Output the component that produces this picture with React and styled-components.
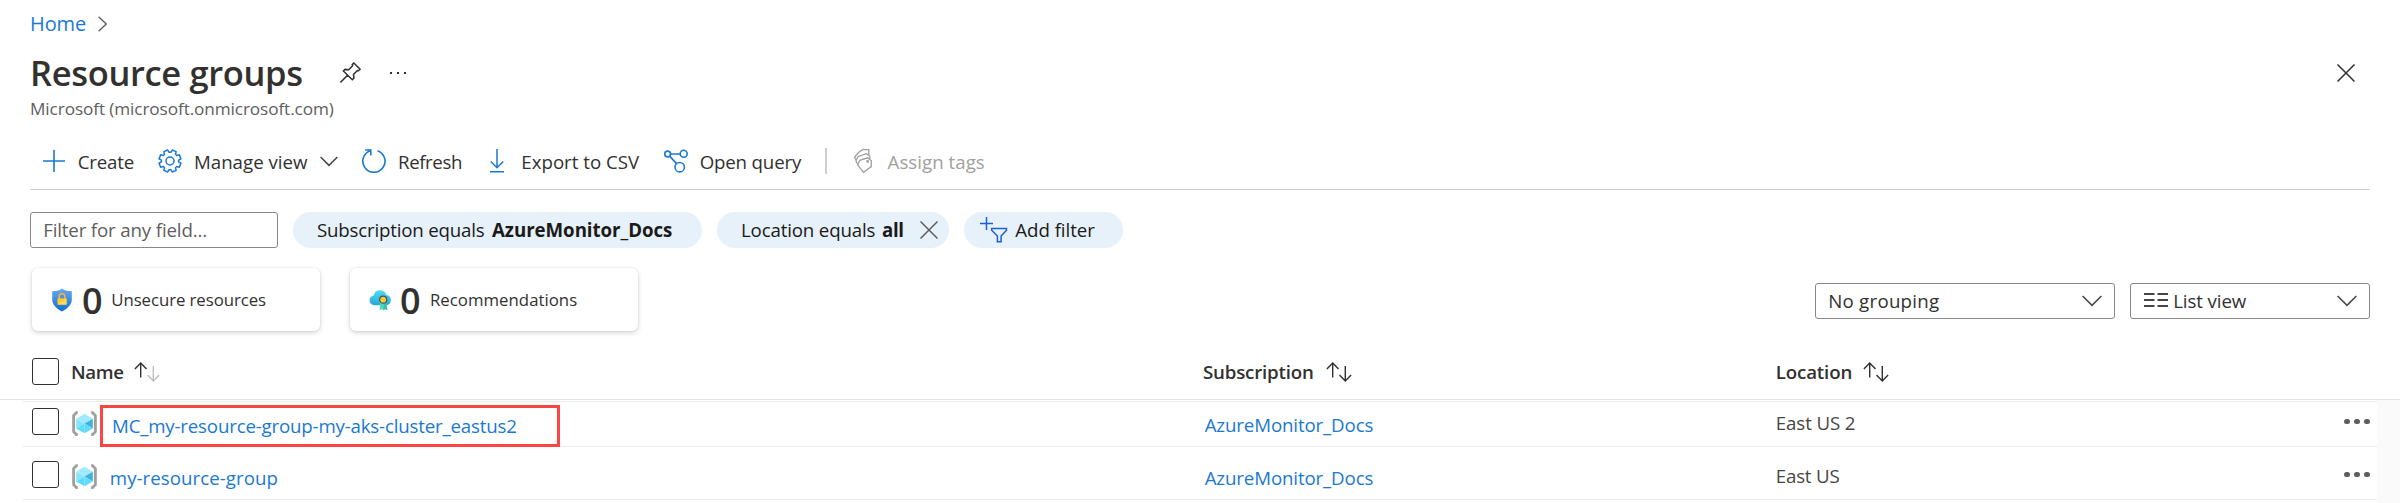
import React from "react";
import styled, { createGlobalStyle } from "styled-components";

const GlobalStyle = createGlobalStyle`
  body {
    margin: 0;
    background: #fff;
    color: #323130;
    font-family: "Open Sans", "Noto Sans", sans-serif;
    overflow: hidden;
  }
  *, *::before, *::after { box-sizing: border-box; }
  svg { display: block; flex: none; }
`;

const BLUE = "#1b79d2";

const Page = styled.main`
  width: 2400px;
  height: 503px;
  background: #fff;
  overflow: hidden;
`;

const Label = styled.span`
  flex: none;
  display: block;
  white-space: pre;
  font-size: ${(p) => p.$size || 18.7}px;
  line-height: ${(p) => p.$line || 25}px;
  font-weight: ${(p) => p.$weight || 400};
  letter-spacing: ${(p) => p.$track || 0}px;
  color: ${(p) => p.$color || "inherit"};
  width: ${(p) => (p.$w ? p.$w + "px" : "auto")};
  margin-left: ${(p) => p.$gap || 0}px;
`;

const LinkText = styled(Label).attrs({ as: "a" })`
  color: ${BLUE};
  text-decoration: none;
`;

const Icon = styled.svg`
  margin-left: ${(p) => p.$gap || 0}px;
  fill: none;
  stroke: ${(p) => p.$stroke || BLUE};
  stroke-width: ${(p) => p.$weight || 1.5};
`;

const Breadcrumb = styled.nav`
  height: 47px;
  padding-left: 30px;
  display: flex;
  align-items: center;
`;

const TitleRow = styled.header`
  height: 51px;
  padding: 0 45px 0 30px;
  display: flex;
  align-items: center;
`;

const Spacer = styled.div`
  flex: 1;
`;

const Subtitle = styled.div`
  height: 21px;
  padding-left: 30px;
  display: flex;
  align-items: center;
  color: #605e5c;
`;

const Toolbar = styled.div`
  height: 56px;
  margin: 15px 30px 0;
  padding-left: 13px;
  border-bottom: 1px solid #d2d0ce;
  display: flex;
  align-items: center;

  ${Icon} { margin-bottom: 1px; }
`;

const Separator = styled.div`
  width: 2px;
  height: 26px;
  margin-left: 23px;
  margin-bottom: 1px;
  background: #d2d0ce;
`;

const Filters = styled.div`
  display: flex;
  gap: 15px;
  margin: 22px 30px 0;
`;

const Field = styled.div`
  display: flex;
  align-items: center;
  width: ${(p) => p.$w}px;
  height: 36px;
  padding: 0 ${(p) => p.$right || 0}px 1px ${(p) => p.$left || 0}px;
  border: 1px solid #8a8886;
  border-radius: 3px;
`;

const Pill = styled.div`
  display: flex;
  align-items: center;
  width: ${(p) => p.$w}px;
  height: 36px;
  padding: 0 0 1px ${(p) => p.$left}px;
  border-radius: 18px;
  background: #e6f1fa;
  color: #1b1a19;
`;

const Summary = styled.section`
  display: flex;
  margin: 20px 30px 0 32px;
  height: 63px;
`;

const Card = styled.div`
  display: flex;
  align-items: center;
  width: 288px;
  height: 63px;
  margin-right: 30px;
  padding-left: ${(p) => p.$left}px;
  border-radius: 6px;
  background: #fff;
  box-shadow: 0 2px 5px rgba(0, 0, 0, 0.16), 0 0 2px rgba(0, 0, 0, 0.12);
`;

const Count = styled(Label)`
  font-size: 36px;
  line-height: 49px;
  font-weight: 600;
  letter-spacing: -0.5px;
  margin-top: 1px;
`;

const Selects = styled.div`
  display: flex;
  gap: 15px;
  padding-top: 15px;
`;

const COLUMNS = "1180px 572.8px 1fr";

const TableHead = styled.div`
  display: grid;
  grid-template-columns: ${COLUMNS};
  height: 56px;
  margin-top: 13px;
  padding-left: 23px;
  border-bottom: 1px solid #e4e3e2;
`;

const HeadCell = styled.div`
  display: flex;
  align-items: center;
  padding-left: ${(p) => p.$left || 0}px;
`;

const TableBody = styled.div`
  display: grid;
  grid-template-columns: 1fr 23px;
  height: 103px;
`;

const RowList = styled.div`
  margin: 1px 0 0 23px;
  border-top: 1px solid #edebe9;
`;

const Gutter = styled.div`
  background: #fafafa;
`;

const Row = styled.div`
  display: grid;
  grid-template-columns: ${COLUMNS};
  height: ${(p) => p.$h}px;
  border-bottom: 1px solid #edebe9;
`;

const Cell = styled.div`
  display: flex;
  align-items: flex-end;
  padding-left: ${(p) => p.$left || 0}px;
  padding-bottom: ${(p) => p.$bottom || 0}px;
`;

const NameCell = styled(Cell)`
  position: relative;
`;

const CheckBox = styled.div`
  flex: none;
  width: 27px;
  height: 27px;
  margin-bottom: ${(p) => p.$bottom || 0}px;
  border: 1px solid #323130;
  border-radius: 3px;
`;

const RowIcon = styled.div`
  margin: 0 0 10px 13px;
`;

const TextSlot = styled.div`
  margin-bottom: ${(p) => p.$bottom}px;
`;

const Highlight = styled.div`
  position: absolute;
  left: 77px;
  top: 3px;
  width: 460px;
  height: 42px;
  border: 3px solid #fb4444;
`;

const Dots = styled.div`
  display: flex;
  gap: 4.5px;
  margin: 0 7.5px 22px auto;
`;

const Dot = styled.i`
  width: 5.4px;
  height: 5.4px;
  border-radius: 50%;
  background: #605e5c;
`;

const Chevron = ({ gap, w = 20, h = 10 }) => (
  <Icon $gap={gap} $stroke="#484644" width={w} height={h + 2} viewBox={`0 0 ${w} ${h + 2}`}>
    <path d={`M.6 1L${w / 2} ${h + 0.4}L${w - 0.6} 1`} />
  </Icon>
);

const Cross = ({ gap, color, weight }) => (
  <Icon $gap={gap} $stroke={color} $weight={weight} width="18" height="18" viewBox="0 0 18 18">
    <path d="M.5.5l17 17M17.5.5l-17 17" />
  </Icon>
);

const gearPath = (() => {
  const pts = [];
  const teeth = 8;
  for (let i = 0; i < teeth; i++) {
    const a = (i * 2 * Math.PI) / teeth - Math.PI / 2 + Math.PI / 8;
    [[-0.29, 8.7], [-0.19, 11.2], [0.19, 11.2], [0.29, 8.7]].forEach(([d, r]) =>
      pts.push(`${(12 + r * Math.cos(a + d)).toFixed(2)} ${(12 + r * Math.sin(a + d)).toFixed(2)}`)
    );
  }
  return "M" + pts.join("L") + "Z";
})();

const SortArrows = ({ ascending }) => (
  <Icon $gap={11} $stroke="#323130" $weight="1.4" width="26" height="20" viewBox="0 0 26 20">
    <path d="M6.7 15.5V1.2M.9 6.9l5.8-5.9 5.8 5.9" />
    <path stroke={ascending ? "#c0bebc" : "#323130"} d="M19.3 4v14.6M13.5 13l5.8 5.9 5.8-5.9" />
  </Icon>
);

const CubeIcon = () => (
  <svg width="25" height="25" viewBox="0 0 25 25">
    <path d="M5.800 1.700H4.400L1.600 4.500v16.200l2.800 2.800h1.400M19.200 1.700h1.400l2.800 2.800v16.200l-2.800 2.800h-1.400" fill="none" stroke="#a0a0a0" strokeWidth="2.800" />
    <path d="M12.500 2.800l8.300 4.900-8.300 4.800-8.300-4.800z" fill="#a0eafd" />
    <path d="M4.200 7.700l8.300 4.800-8.300 4.900z" fill="#86e4fb" />
    <path d="M4.200 17.400l8.300-4.900v9.800z" fill="#5bdcfb" />
    <path d="M20.800 7.700l-8.300 4.800 8.300 4.900z" fill="#3fb3d6" />
    <path d="M12.500 12.500l8.300 4.900-8.300 4.900z" fill="#5fdcfa" />
  </svg>
);

const Shield = () => (
  <svg width="20" height="24" viewBox="0 0 20 24">
    <defs>
      <linearGradient id="shield" x1="0" y1="0" x2="0" y2="1">
        <stop offset="0" stopColor="#6aa8f0" />
        <stop offset="1" stopColor="#0f6fd0" />
      </linearGradient>
    </defs>
    <path d="M10 .5c3 2.400 6.300 2.600 9.800 2.800v8.200c0 6-5.300 9.600-9.800 12C5.500 21.100.2 17.500.2 11.500V3.300C3.700 3.100 7 2.900 10 .5z" fill="url(#shield)" />
    <path d="M7.200 11V8.300a2.800 2.800 0 015.600 0V11" fill="none" stroke="#f7b23b" strokeWidth="1.600" />
    <path d="M5.500 10.400h9v6.200h-9z" fill="#ffca28" />
    <path d="M5.500 16.600l9-6.200v6.200z" fill="#ffd75e" />
  </svg>
);

const CloudBadge = () => (
  <svg width="22" height="22" viewBox="0 0 22 22">
    <defs>
      <linearGradient id="cloud" x1="0" y1="0" x2="0" y2="1">
        <stop offset="0" stopColor="#50dcf2" />
        <stop offset="1" stopColor="#2ba6d8" />
      </linearGradient>
    </defs>
    <path d="M5.200 16.300a5 5 0 01-.6-9.900A6.700 6.700 0 0117.500 6a5.200 5.200 0 01-.3 10.300z" fill="url(#cloud)" />
    <path d="M11.200 13.500l5.800 0 1.400 7.700-2.600-1.100-1.200 1.400-1.200-1.400-2.800 1.100z" fill="#4fd8c0" />
    <path d="M14.600 14v7.500l1.200-1.400 2.600 1.100L17 13.500z" fill="#38bfa8" />
    <circle cx="14.200" cy="10.700" r="3.500" fill="#ffca28" stroke="#3a5565" strokeWidth="1.200" />
  </svg>
);

const rows = [
  { name: "MC_my-resource-group-my-aks-cluster_eastus2", gap: 15, track: -0.182, bottom: 8, region: "East US 2", regionTrack: -0.114, h: 45, marked: true },
  { name: "my-resource-group", gap: 12.8, track: 0.044, bottom: 9, region: "East US", regionTrack: -0.2, h: 53 },
];

export default function App() {
  return (
    <Page>
      <GlobalStyle />
      <Breadcrumb>
        <LinkText $size={20} $line={27} $track={-0.098} $w={56} href="#">Home</LinkText>
        <Icon $gap={12} $stroke="#605e5c" $weight="1.3" width="9" height="16" viewBox="0 0 9 16">
          <path d="M.6.7L8.200 8 .6 15.300" />
        </Icon>
      </Breadcrumb>

      <TitleRow>
        <Label $size={34.5} $line={47} $weight={600} $track={-0.34} $w={273}>Resource groups</Label>
        <Icon $gap={37} $stroke="#323130" width="21" height="21" viewBox="0 0 21 21">
          <path d="M13.800 1l6.300 6.200-1.500 1.500-1.200-.2-3.900 4 .5 3.600-1.700 1.700L3.400 9l1.600-1.600 3.700.3 3.900-4 -.3-1.200zM7.600 13.300L.4 20.500" />
        </Icon>
        <Icon $gap={29} $stroke="none" width="16" height="4" viewBox="0 0 16 4">
          <path fill="#323130" d="M0 1h2v2H0zM7 1h2v2H7zM14 1h2v2h-2z" />
        </Icon>
        <Spacer />
        <Cross color="#323130" weight="1.500" />
      </TitleRow>
      <Subtitle>
        <Label $size={17.2} $line={23} $track={-0.1}>Microsoft (microsoft.onmicrosoft.com)</Label>
      </Subtitle>

      <Toolbar>
        <Icon $weight="1.600" width="22" height="24" viewBox="0 0 22 24">
          <path d="M11 1v22M0 12h22" />
        </Icon>
        <Label $gap={12.7} $w={56.3} $track={-0.189}>Create</Label>
        <Icon $gap={24} width="24" height="24" viewBox="0 0 24 24" strokeLinejoin="round">
          <path d={gearPath} />
          <circle cx="12" cy="12" r="4" />
        </Icon>
        <Label $gap={12} $w={114} $track={-0.008}>Manage view</Label>
        <Chevron gap={12} w={18} h={9} />
        <Icon $gap={24} $weight="1.600" width="24" height="24" viewBox="0 0 24 24">
          <path d="M15.500 1.700A11.100 11.100 0 118.300 1.700M3.200 1h5.600v5.500" />
        </Icon>
        <Label $gap={12} $w={64} $track={-0.392}>Refresh</Label>
        <Icon $gap={28} width="14" height="24" viewBox="0 0 14 24">
          <path d="M7 0v18.500M.8 12.500L7 18.800l6.200-6.300M0 22.800h14" />
        </Icon>
        <Label $gap={17.3} $w={118.7}>Export to CSV</Label>
        <Icon $gap={24} $weight="1.600" width="24" height="24" viewBox="0 0 24 24">
          <circle cx="3.600" cy="5" r="2.900" />
          <circle cx="19.700" cy="4.800" r="3.500" />
          <circle cx="15.700" cy="18.200" r="4.700" />
          <path d="M6.500 5h9.700M5.700 7.100l6.800 7.500" />
        </Icon>
        <Label $gap={11.7} $w={102.3} $track={-0.167}>Open query</Label>
        <Separator />
        <Icon $gap={27} $stroke="#a19f9d" $weight="1.300" width="18" height="24" viewBox="0 0 18 24">
          <path d="M9.600 23.300l-6-7.400 2.100-4.500 8-2.600 3.600 2.900v5.900zM3 14.400L2 12l1.900-4.300 8.300-3 3.600 2.300v2.800M1.600 10.800L.7 8l3.600-4.200L8.600.7h6.200v5" />
          <circle cx="13.600" cy="12.400" r=".8" />
        </Icon>
        <Label $gap={15.6} $track={0.03} $color="#a19f9d">Assign tags</Label>
      </Toolbar>

      <Filters>
        <Field $w={248} $left={12.2}>
          <Label $color="#605e5c" $track={-0.149}>Filter for any field...</Label>
        </Field>
        <Pill $w={409} $left={24}>
          <Label $w={175} $track={-0.19}>Subscription equals</Label>
          <Label $weight={700} $track={-0.053}>AzureMonitor_Docs</Label>
        </Pill>
        <Pill $w={232} $left={24}>
          <Label $w={141} $track={-0.161}>Location equals</Label>
          <Label $weight={700} $w={23} $track={-0.4}>all</Label>
          <Cross gap={15} color="#605e5c" />
        </Pill>
        <Pill $w={159} $left={16}>
          <Icon $stroke="#1b5fd9" width="28" height="26" viewBox="0 0 28 26">
            <path d="M6.500 0v13M0 6.500h13M11.700 11.500h14.800v1.800l-5.400 5.700v5.700h-3.700v-5.700l-5.700-5.700z" />
          </Icon>
          <Label $gap={7.3} $track={-0.05}>Add filter</Label>
        </Pill>
      </Filters>

      <Summary>
        <Card $left={20}>
          <Shield />
          <Count $gap={10} $w={20.6}>0</Count>
          <Label $size={16.8} $line={23} $gap={8.7} $track={-0.07}>Unsecure resources</Label>
        </Card>
        <Card $left={19}>
          <CloudBadge />
          <Count $gap={9} $w={20.6}>0</Count>
          <Label $size={16.8} $line={23} $gap={9.4} $track={0.02}>Recommendations</Label>
        </Card>
        <Spacer />
        <Selects>
          <Field $w={300} $left={12.2} $right={12}>
            <Label $track={0.25}>No grouping</Label>
            <Spacer />
            <Chevron />
          </Field>
          <Field $w={240} $left={13} $right={12}>
            <Icon $stroke="#484644" $weight="2" width="24" height="18" viewBox="0 0 24 18">
              <path d="M0 2h10.500M13.500 2H24M0 8h10.500M13.500 8H24M0 14h10.500M13.500 14H24" />
            </Icon>
            <Label $gap={5.2} $track={-0.105}>List view</Label>
            <Spacer />
            <Chevron />
          </Field>
        </Selects>
      </Summary>

      <TableHead>
        <HeadCell $left={9}>
          <CheckBox />
          <Label $gap={11.9} $w={52.4} $weight={600} $track={-0.335}>Name</Label>
          <SortArrows ascending />
        </HeadCell>
        <HeadCell>
          <Label $w={111.5} $weight={600} $track={-0.189}>Subscription</Label>
          <SortArrows />
        </HeadCell>
        <HeadCell>
          <Label $w={76.5} $weight={600} $track={-0.156}>Location</Label>
          <SortArrows />
        </HeadCell>
      </TableHead>

      <TableBody>
        <RowList>
          {rows.map((row) => (
            <Row key={row.name} $h={row.h}>
              <NameCell $left={9}>
                <CheckBox $bottom={11} />
                <RowIcon><CubeIcon /></RowIcon>
                <TextSlot $bottom={row.bottom}>
                  <LinkText $gap={row.gap} $track={row.track} href="#">{row.name}</LinkText>
                </TextSlot>
                {row.marked && <Highlight />}
              </NameCell>
              <Cell $left={1.7} $bottom={9}>
                <LinkText $track={-0.13} href="#">AzureMonitor_Docs</LinkText>
              </Cell>
              <Cell>
                <TextSlot $bottom={11}>
                  <Label $track={row.regionTrack} $color="#484644">{row.region}</Label>
                </TextSlot>
                <Dots><Dot /><Dot /><Dot /></Dots>
              </Cell>
            </Row>
          ))}
        </RowList>
        <Gutter />
      </TableBody>
    </Page>
  );
}
